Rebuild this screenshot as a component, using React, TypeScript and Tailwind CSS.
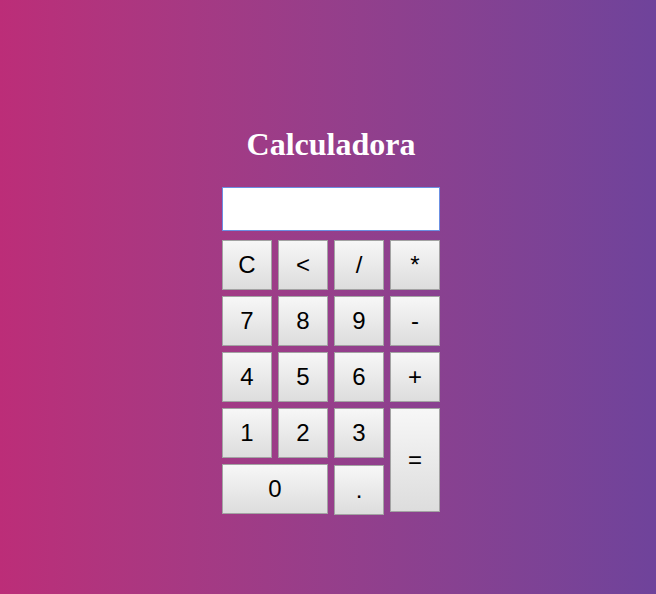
const keys = [
  { label: "C", cls: "" },
  { label: "<", cls: "" },
  { label: "/", cls: "" },
  { label: "*", cls: "" },
  { label: "7", cls: "" },
  { label: "8", cls: "" },
  { label: "9", cls: "" },
  { label: "-", cls: "" },
  { label: "4", cls: "" },
  { label: "5", cls: "" },
  { label: "6", cls: "" },
  { label: "+", cls: "" },
  { label: "1", cls: "" },
  { label: "2", cls: "" },
  { label: "3", cls: "" },
  { label: "=", cls: "row-span-2 h-[104px]" },
  { label: "0", cls: "col-span-2" },
  { label: ".", cls: "mt-[1px]" },
];

export default function App() {
  return (
    <div className="flex min-h-[594px] flex-col items-center bg-gradient-to-r from-[#bc2d78] to-[#6f439b] pl-[6px] pt-[126px]">
      <h1 className="font-['Liberation_Serif',serif] text-[32px] font-bold leading-[37px] text-white">
        Calculadora
      </h1>
      <div className="mt-[24px] flex w-[218px] flex-col">
        <input
          type="text"
          className="h-[44px] w-full border border-[#6b8fe2] bg-white outline-none"
        />
        <div className="mt-[9px] grid grid-cols-[repeat(4,50px)] auto-rows-[50px] gap-[6px]">
          {keys.map((k) => (
            <button
              key={k.label}
              className={`flex h-[50px] items-center justify-center border border-[#a3a3a3] bg-gradient-to-b from-[#f7f7f7] to-[#dddddd] font-['Liberation_Sans',Arial,sans-serif] text-2xl text-black ${k.cls}`}
            >
              {k.label}
            </button>
          ))}
        </div>
      </div>
    </div>
  );
}
